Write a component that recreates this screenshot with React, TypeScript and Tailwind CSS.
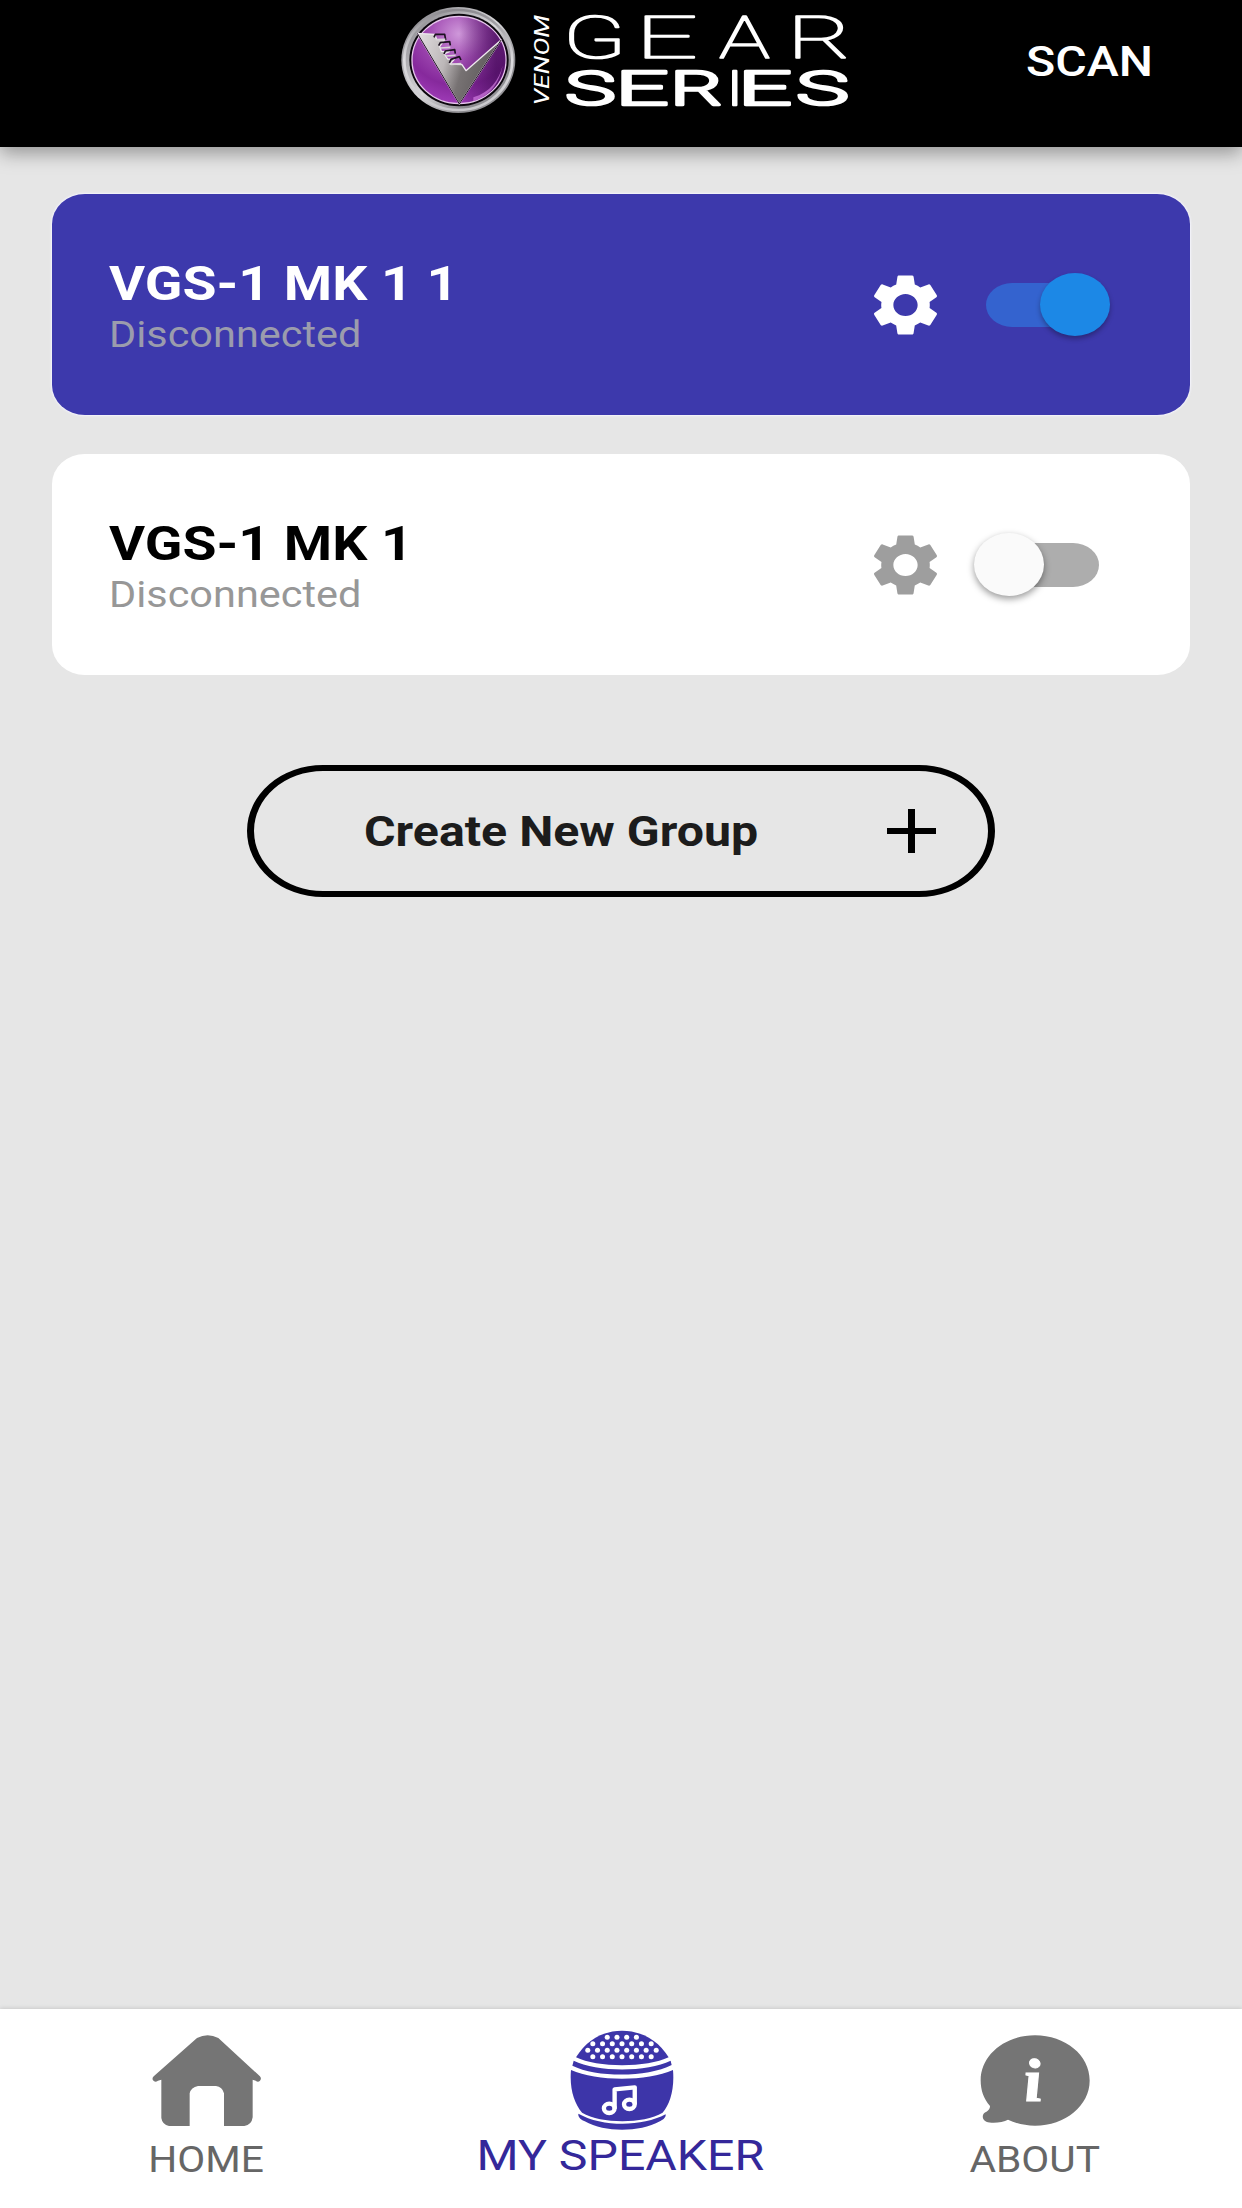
import { useState, type ReactNode } from 'react';
import { MdSettings } from 'react-icons/md';

type Letter = { char: string; x: number; stretch: number };

const gear: Letter[] = [
  { char: 'G', x: 562.8, stretch: 1.59 },
  { char: 'E', x: 635.3, stretch: 1.88 },
  { char: 'A', x: 719, stretch: 1.46 },
  { char: 'R', x: 787.3, stretch: 1.68 },
];

const series: Letter[] = [
  { char: 'S', x: 564.8, stretch: 1.78 },
  { char: 'E', x: 615.3, stretch: 1.94 },
  { char: 'R', x: 669.9, stretch: 1.7 },
  { char: 'I', x: 728.2, stretch: 1 },
  { char: 'E', x: 737.8, stretch: 1.97 },
  { char: 'S', x: 795.7, stretch: 1.86 },
];

function Logo() {
  return (
    <svg className="h-[147px] w-[470px] shrink-0 font-[Roboto]" viewBox="390 0 470 147" role="img" aria-label="Venom Gear Series">
      <defs>
        <linearGradient id="ring" x1="0" y1="0" x2="1" y2="1">
          <stop offset="0" stopColor="#77757a" />
          <stop offset="0.25" stopColor="#a9a8ac" />
          <stop offset="0.5" stopColor="#d8d7da" />
          <stop offset="0.75" stopColor="#8b8a8e" />
          <stop offset="1" stopColor="#a5a3a8" />
        </linearGradient>
        <linearGradient id="rim" x1="0" y1="0" x2="0" y2="1">
          <stop offset="0" stopColor="#8d8b90" />
          <stop offset="0.5" stopColor="#dcdbde" />
          <stop offset="1" stopColor="#c9c8cc" />
        </linearGradient>
        <radialGradient id="orb" cx="0.5" cy="0.2" r="0.85">
          <stop offset="0" stopColor="#cf98da" />
          <stop offset="0.35" stopColor="#a450b5" />
          <stop offset="0.7" stopColor="#86299c" />
          <stop offset="1" stopColor="#a43fbd" />
        </radialGradient>
        <linearGradient id="orbShade" x1="0" y1="0" x2="1" y2="0">
          <stop offset="0.5" stopColor="#3c0650" stopOpacity="0" />
          <stop offset="0.9" stopColor="#3c0650" stopOpacity="0.65" />
        </linearGradient>
        <linearGradient id="fang" x1="0" y1="0" x2="1" y2="0.25">
          <stop offset="0" stopColor="#e3dfe1" />
          <stop offset="0.4" stopColor="#bcb7b8" />
          <stop offset="0.62" stopColor="#777273" />
          <stop offset="1" stopColor="#5b5758" />
        </linearGradient>
      </defs>

      <g transform="translate(390 0) scale(0.33333)">
        <ellipse cx="205" cy="180" rx="171" ry="159" fill="url(#ring)" />
        <ellipse cx="205" cy="180" rx="162" ry="150" fill="none" stroke="url(#rim)" strokeWidth="8" />
        <ellipse cx="207" cy="180" rx="149" ry="139" fill="#0c080e" />
        <ellipse cx="207" cy="180" rx="141" ry="131" fill="url(#orb)" stroke="#e6c5ec" strokeWidth="4" />
        <ellipse cx="207" cy="180" rx="139" ry="129" fill="url(#orbShade)" />
        <path d="M250 292C300 278 328 240 338 196C330 246 300 290 250 303Z" fill="#d27be0" opacity="0.7" />
        <path
          d="M82 100L134 103L140 118L164 120L149 139L154 154L178 155L163 162L173 177L193 178L180 192L216 194L228 212L334 119L208 312Z"
          fill="url(#fang)"
          stroke="#efe9ef"
          strokeWidth="4"
          strokeLinejoin="round"
        />
        <path d="M82 100L208 312L334 119" fill="none" stroke="#1d0a22" strokeWidth="3" />
        <g fill="none" stroke="#1c1220" strokeWidth="5" strokeLinejoin="round">
          <path d="M132 112L136 103L164 103L167 120" />
          <path d="M146 137L151 128L179 125L181 136" />
          <path d="M162 162L166 153L194 149L196 161" />
          <path d="M178 189L183 178L208 170L213 180" />
        </g>
        <g fill="none" stroke="#d9d3d9" strokeWidth="5">
          <path d="M137 119L166 118" />
          <path d="M151 144L181 142" />
          <path d="M167 168L197 166" />
          <path d="M183 193L214 191" />
        </g>
      </g>

      <g fill="#fff" stroke="#fff" strokeLinejoin="round">
        <text
          transform="translate(548.5 105.5) rotate(-90) scale(1.31 1)"
          fontSize="20.5"
          fontStyle="italic"
          strokeWidth="0"
        >
          VENOM
        </text>
        {gear.map((l) => (
          <text
            key={l.char}
            transform={`translate(${l.x} 58.3) scale(${l.stretch} 1)`}
            fontSize="58.5"
            fontWeight="100"
            strokeWidth="1.6"
          >
            {l.char}
          </text>
        ))}
        {series.map((l, i) => (
          <text
            key={i}
            transform={`translate(${l.x} 104.5) scale(${l.stretch} 1)`}
            fontSize="48.5"
            fontWeight="300"
            strokeWidth="2.5"
          >
            {l.char}
          </text>
        ))}
      </g>
    </svg>
  );
}

function Toggle({ on, onChange }: { on: boolean; onChange: () => void }) {
  return (
    <button
      role="switch"
      aria-checked={on}
      onClick={onChange}
      className="relative flex h-[63px] w-[136px] items-center"
    >
      <span className={`ml-[12px] h-[44px] w-[113px] rounded-[26px/22px] ${on ? 'bg-[#3463cf]' : 'bg-[#adadad]'}`} />
      <span
        className={`absolute top-0 h-[63px] w-[70px] rounded-[50%] ${
          on ? 'left-[66px] bg-[#1c88e6] shadow-[0_3px_5px_rgba(0,0,0,0.3)]' : 'left-0 bg-[#fafafa] shadow-[0_3px_7px_rgba(0,0,0,0.4)]'
        }`}
      />
    </button>
  );
}

function SpeakerCard({ name, on, onChange }: { name: string; on: boolean; onChange: () => void }) {
  return (
    <section
      className={`flex h-[221px] items-center rounded-[33px/30px] pl-[57px] pr-[80px] ${
        on ? 'bg-[#3d39ac] shadow-[0_0_2px_1px_rgba(245,245,255,0.9)]' : 'bg-white'
      }`}
    >
      <div className="flex grow flex-col items-start gap-[8.5px] pt-[4px]">
        <h2
          className={`origin-left scale-x-[1.14] whitespace-nowrap text-[48.5px] font-bold leading-none ${
            on ? 'text-white' : 'text-black'
          }`}
        >
          {name}
        </h2>
        <p className={`origin-left scale-x-[1.133] text-[36.6px] leading-none ${on ? 'text-[#9b9cad]' : 'text-[#979797]'}`}>
          Disconnected
        </p>
      </div>
      <button aria-label="Settings" className="mr-[28px]">
        <MdSettings
          preserveAspectRatio="none"
          className={`h-[74px] w-[81px] ${on ? 'text-white' : 'text-[#9e9e9e]'}`}
        />
      </button>
      <Toggle on={on} onChange={onChange} />
    </section>
  );
}

function HomeIcon() {
  return (
    <svg className="-ml-[2px] h-[91px] w-[109px]" viewBox="95 135 327 273" preserveAspectRatio="none" fill="#757575">
      <path d="M230 144Q262 127 294 144L418 258Q425 265 419 272Q413 278 406 272L397 269V382Q394 405 372 408H311V310Q306 290 287 288H233Q212 292 208 310V408H146Q126 404 123 384V269L113 272Q104 279 98 271Q94 264 101 258Z" />
    </svg>
  );
}

const holeRows = [
  { y: 142, xs: [441, 470, 499, 528] },
  { y: 161, xs: [398, 427, 456, 485, 514, 543, 572] },
  { y: 181, xs: [383, 412, 441, 470, 499, 528, 557, 587] },
  { y: 200, xs: [398, 427, 456, 485, 514, 543, 572] },
];

function SpeakerIcon() {
  return (
    <svg className="ml-px h-[100px] w-[104px]" viewBox="330 120 310 300" preserveAspectRatio="none">
      <g fill="#3d35a9">
        <path d="M348 202C380 149 430 122 485 122S592 149 624 202C560 234 410 234 348 202Z" />
        <path d="M341 212C410 247 560 247 630 212L633 225C560 263 410 263 337 227Z" />
        <path d="M333 240C410 275 560 275 637 240C642 296 628 343 606 368C548 402 424 402 366 368C342 340 328 295 333 240Z" />
        <path d="M355 371C425 411 545 411 615 373C617 382 607 390 598 394C535 428 435 428 374 394C364 390 353 382 355 371Z" />
      </g>
      <g fill="#fff">
        {holeRows.map((row) => row.xs.map((x) => <circle key={`${x}-${row.y}`} cx={x} cy={row.y} r="7.5" />))}
      </g>
      <g fill="none" stroke="#fff" strokeWidth="13" strokeLinejoin="round">
        <ellipse cx="447" cy="355" rx="16" ry="14" />
        <ellipse cx="507" cy="343" rx="16" ry="14" />
        <path d="M463 356V298L523 292V343" />
      </g>
    </svg>
  );
}

function AboutIcon() {
  return (
    <svg className="h-[91px] w-[110px]" viewBox="119 135 330 272" preserveAspectRatio="none">
      <path
        d="M284 136C375 136 448 196 448 271S375 406 284 406C253 406 226 399 203 388C187 397 154 400 138 394C125 388 124 374 134 367C142 362 149 357 149 347C130 326 121 300 121 271C121 196 193 136 284 136Z"
        fill="#757575"
      />
      <text
        transform="translate(254 333) skewX(6) scale(1.14 1)"
        fill="#fff"
        stroke="#fff"
        strokeWidth="3"
        fontFamily="Liberation Serif, serif"
        fontSize="182"
        fontWeight="700"
        fontStyle="italic"
      >
        i
      </text>
    </svg>
  );
}

function NavItem({ icon, label, active = false }: { icon: ReactNode; label: string; active?: boolean }) {
  return (
    <a
      href="#"
      className={`flex flex-1 flex-col items-center ${active ? 'pt-[21px] text-[#34289a]' : 'pt-[26px] text-[#666]'}`}
    >
      {icon}
      <span
        className={`-ml-px scale-x-[1.13] whitespace-nowrap leading-none ${active ? 'mt-[4px] text-[42.7px]' : 'mt-[15.5px] text-[36px]'}`}
      >
        {label}
      </span>
    </a>
  );
}

export default function App() {
  const [speakers, setSpeakers] = useState([
    { name: 'VGS-1 MK 1 1', on: true },
    { name: 'VGS-1 MK 1', on: false },
  ]);
  const toggle = (index: number) =>
    setSpeakers((list) => list.map((s, i) => (i === index ? { ...s, on: !s.on } : s)));

  return (
    <div className="flex h-[2208px] w-[1242px] flex-col overflow-hidden bg-[#e6e6e6] font-[Roboto,sans-serif]">
      <header className="z-10 flex h-[147px] shrink-0 bg-black pl-[390px] shadow-[0_6px_18px_rgba(0,0,0,0.36)]">
        <Logo />
        <button className="ml-[166px] mt-[40px] h-[43px] origin-left scale-x-[1.123] text-[43px] font-medium leading-none text-white">
          SCAN
        </button>
      </header>

      <main className="flex grow flex-col px-[52px] pt-[47px]">
        <div className="flex flex-col gap-[39px]">
          {speakers.map((s, i) => (
            <SpeakerCard key={s.name} name={s.name} on={s.on} onChange={() => toggle(i)} />
          ))}
        </div>
        <button className="mt-[90px] flex h-[132px] w-[748px] items-center self-center rounded-[76px/66px] border-x-[7px] border-y-[6px] border-black pl-[110px] pr-[52px]">
          <span className="origin-left scale-x-[1.134] whitespace-nowrap text-[42.6px] font-bold leading-none text-[#1c1c1c]">
            Create New Group
          </span>
          <svg className="ml-auto h-[44px] w-[49px]" viewBox="0 0 49 44" fill="#000">
            <path d="M21 0h7v19h21v6H28v19h-7V25H0v-6h21Z" />
          </svg>
        </button>
      </main>

      <nav className="flex h-[199px] shrink-0 bg-white shadow-[0_-1px_4px_rgba(0,0,0,0.12)]">
        <NavItem icon={<HomeIcon />} label="HOME" />
        <NavItem icon={<SpeakerIcon />} label="MY SPEAKER" active />
        <NavItem icon={<AboutIcon />} label="ABOUT" />
      </nav>
    </div>
  );
}
